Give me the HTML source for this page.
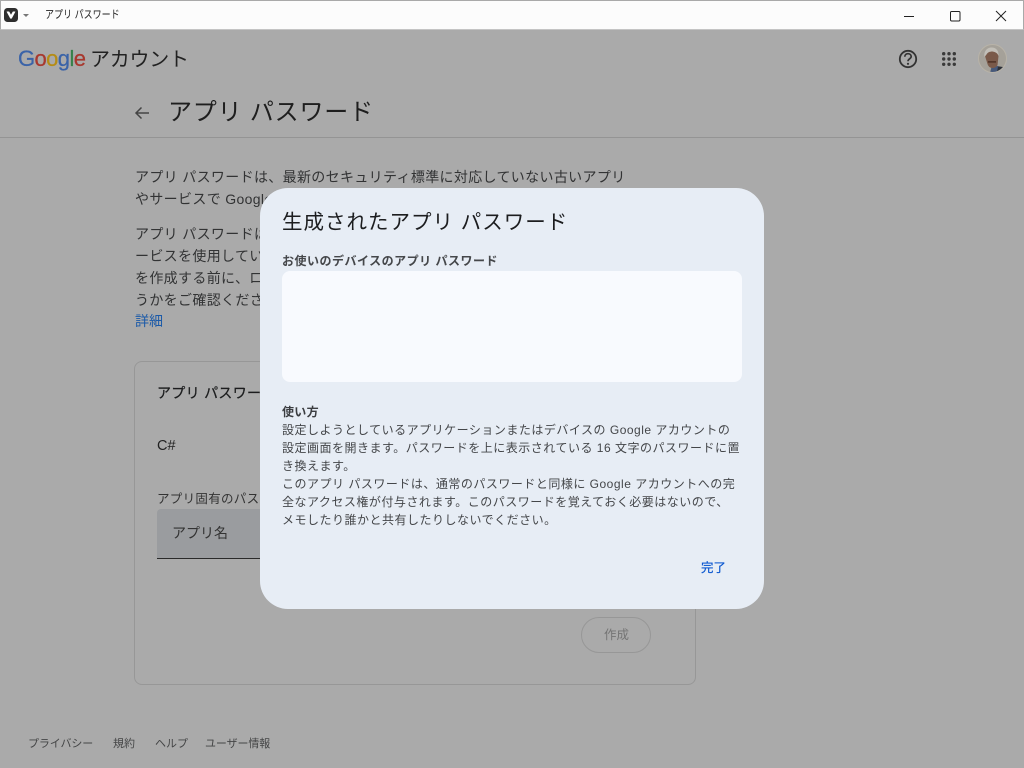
<!DOCTYPE html>
<html lang="ja"><head><meta charset="utf-8"><title>アプリ パスワード</title>
<style>
html,body{margin:0;padding:0;width:1024px;height:768px;overflow:hidden;background:#aaaaaa}
body{position:relative;font-family:"Liberation Sans","Noto Sans CJK JP",sans-serif;color:#1c1d1e}
.t{position:absolute;white-space:nowrap;line-height:22px}
.b{position:absolute;box-sizing:border-box}
.p{font-size:14px;color:#323334;letter-spacing:.34px}
.d{font-size:12px;line-height:18px;color:#444649;letter-spacing:.5px}
.f{font-size:11px;color:#444546;line-height:16px;top:736px}
</style></head><body>
<!-- title bar -->
<div class="b" style="left:0;top:0;width:1024px;height:30px;background:#fcfcfc;border:1px solid #a9a9a9;border-bottom:1px solid #c4c4c4"></div>
<svg class="b" style="left:4px;top:8px" width="14" height="14" viewBox="0 0 14 14"><rect width="14" height="14" rx="3.500" fill="#2e2e2e"/><path d="M2.600 3.800Q2.600 3.500 3 3.500H4.800Q5.200 3.500 5.400 3.900L7 6.700L8.600 3.900Q8.800 3.500 9.200 3.500H11Q11.400 3.500 11.400 3.800L7.900 10.200Q7 11.300 6.100 10.200Z" fill="#fff"/></svg>
<svg class="b" style="left:23px;top:14px" width="6" height="3" viewBox="0 0 6 3"><path d="M0 0H6L3 3Z" fill="#777"/></svg>
<div class="t" style="left:45px;top:4px;font-size:11px;color:#222;transform:scaleX(.82);transform-origin:left center">アプリ パスワード</div>
<svg class="b" style="left:900px;top:8px" width="110" height="16" viewBox="0 0 110 16" fill="none" stroke="#222" stroke-width="1"><path d="M4 8.500H14"/><rect x="50.500" y="3.500" width="9.500" height="9.500" rx="1.200"/><path d="M96 3L106 13M106 3L96 13"/></svg>

<!-- header -->
<div class="t" style="left:18px;top:45px;font-size:22px;line-height:28px;letter-spacing:-.6px;font-family:'Liberation Sans',sans-serif;-webkit-text-stroke:.25px"><span style="color:#3a63a8">G</span><span style="color:#a8382e">o</span><span style="color:#b58c15">o</span><span style="color:#3a63a8">g</span><span style="color:#37824a">l</span><span style="color:#a8382e">e</span></div>
<div class="t" style="left:90px;top:46px;font-size:20px;line-height:28px;color:#222;letter-spacing:-.25px">アカウント</div>
<svg class="b" style="left:897px;top:47.500px" width="22" height="22" viewBox="0 0 22 22" fill="none" stroke="#333" stroke-width="1.800"><circle cx="11" cy="11" r="8.200"/><path d="M7.800 8.800c0-1.900 1.400-3.100 3.200-3.100s3.200 1.200 3.200 2.800c0 2.200-3.200 2.400-3.200 4.700" stroke-width="1.700"/><circle cx="11" cy="15.800" r="1.100" fill="#333" stroke="none"/></svg>
<svg class="b" style="left:942px;top:52px" width="14" height="14" viewBox="0 0 14 14" fill="#3a3a3a"><circle cx="1.700" cy="1.700" r="1.700"/><circle cx="7" cy="1.700" r="1.700"/><circle cx="12.300" cy="1.700" r="1.700"/><circle cx="1.700" cy="7" r="1.700"/><circle cx="7" cy="7" r="1.700"/><circle cx="12.300" cy="7" r="1.700"/><circle cx="1.700" cy="12.300" r="1.700"/><circle cx="7" cy="12.300" r="1.700"/><circle cx="12.300" cy="12.300" r="1.700"/></svg>
<svg class="b" style="left:978px;top:44px" width="29" height="29" viewBox="0 0 29 29"><defs><clipPath id="c"><circle cx="14.500" cy="14.500" r="14"/></clipPath></defs><circle cx="14.500" cy="14.500" r="14" fill="#a5a199"/><g clip-path="url(#c)"><path d="M17 29l1-7 7 1 2 6z" fill="#2c3038"/><path d="M12 29l2-8 6 1 -1 7z" fill="#47597a"/><path d="M7 12c0-5 3-7 6.500-7s7 2 7 7l-1 9c-1 2-3 3-5 3s-4-1-5-4z" fill="#7a5a4a"/><path d="M6.500 13c-1-6 3-9.500 7-9.500 4.500 0 7.500 3 7 8.500-1-3-3-4-6-4.500-3 0-5 1-6 3z" fill="#c2bfb8"/><path d="M10 17h8v1.800h-8z" fill="#54372b"/></g><circle cx="14.500" cy="14.500" r="14" fill="none" stroke="#b8b3a8"/></svg>

<!-- page title -->
<svg class="b" style="left:133px;top:104px" width="18" height="18" viewBox="0 0 18 18" fill="none" stroke="#444" stroke-width="1.500"><path d="M16 9H3M8.500 3.500L3 9l5.500 5.500"/></svg>
<div class="t" style="left:168px;top:96px;font-size:24px;line-height:34px;color:#1e1e1e;letter-spacing:.8px">アプリ パスワード</div>
<div class="b" style="left:0;top:137px;width:1024px;height:1px;background:#949494"></div>

<!-- body text -->
<div class="t p" style="left:135px;top:166px">アプリ パスワードは、最新のセキュリティ標準に対応していない古いアプリ</div>
<div class="t p" style="left:135px;top:188px">やサービスで Google</div>
<div class="t p" style="left:135px;top:223px">アプリ パスワードは</div>
<div class="t p" style="left:135px;top:245px">ービスを使用してい</div>
<div class="t p" style="left:135px;top:267px">を作成する前に、ロ</div>
<div class="t p" style="left:135px;top:289px">うかをご確認くださ</div>
<div class="t p" style="left:135px;top:310px;color:#1c5aa8;letter-spacing:0">詳細</div>

<!-- card -->
<div class="b" style="left:134px;top:361px;width:562px;height:324px;border:1px solid #979797;border-radius:8px"></div>
<div class="t" style="left:157px;top:382px;font-size:14px;color:#1c1d1e;letter-spacing:.3px;-webkit-text-stroke:.25px #1c1d1e">アプリ パスワード</div>
<div class="t" style="left:157px;top:435px;font-size:14.500px;color:#222">C#</div>
<div class="t" style="left:157px;top:488px;font-size:12.500px;line-height:22px;color:#333;letter-spacing:.3px">アプリ固有のパスワード</div>
<div class="b" style="left:157px;top:509px;width:200px;height:50px;background:#9a9c9f;border-bottom:1px solid #2a2a2a;border-radius:4px 4px 0 0"></div>
<div class="t" style="left:172px;top:522px;font-size:14px;color:#333">アプリ名</div>
<div class="b" style="left:581px;top:617px;width:70px;height:36px;border:1px solid #979797;border-radius:18px"></div>
<div class="t" style="left:604px;top:624px;font-size:12.500px;color:#747474">作成</div>

<!-- footer -->
<div class="t f" style="left:28px;letter-spacing:-.1px">プライバシー</div>
<div class="t f" style="left:113px">規約</div>
<div class="t f" style="left:155px">ヘルプ</div>
<div class="t f" style="left:205px;letter-spacing:-.1px">ユーザー情報</div>

<!-- dialog -->
<div class="b" style="left:260px;top:188px;width:504px;height:421px;background:#e7edf5;border-radius:28px"></div>
<div class="t" style="left:282px;top:209px;font-size:20.500px;line-height:28px;color:#1c1d1f;letter-spacing:1px">生成されたアプリ パスワード</div>
<div class="t" style="left:282px;top:252px;font-size:12px;line-height:18px;font-weight:700;color:#45474a;letter-spacing:.5px">お使いのデバイスのアプリ パスワード</div>
<div class="b" style="left:282px;top:271px;width:460px;height:111px;background:#f8fafe;border-radius:8px"></div>
<div class="t d" style="left:282px;top:403px;font-weight:700;color:#3b3d40;letter-spacing:.3px">使い方</div>
<div class="t d" style="left:282px;top:421px">設定しようとしているアプリケーションまたはデバイスの Google アカウントの</div>
<div class="t d" style="left:282px;top:439px">設定画面を開きます。パスワードを上に表示されている 16 文字のパスワードに置</div>
<div class="t d" style="left:282px;top:457px">き換えます。</div>
<div class="t d" style="left:282px;top:475px">このアプリ パスワードは、通常のパスワードと同様に Google アカウントへの完</div>
<div class="t d" style="left:282px;top:493px">全なアクセス権が付与されます。このパスワードを覚えておく必要はないので、</div>
<div class="t d" style="left:282px;top:511px">メモしたり誰かと共有したりしないでください。</div>
<div class="t" style="left:701px;top:558px;font-size:12.500px;line-height:20px;color:#0b57d0;-webkit-text-stroke:.2px #0b57d0">完了</div>
</body></html>
